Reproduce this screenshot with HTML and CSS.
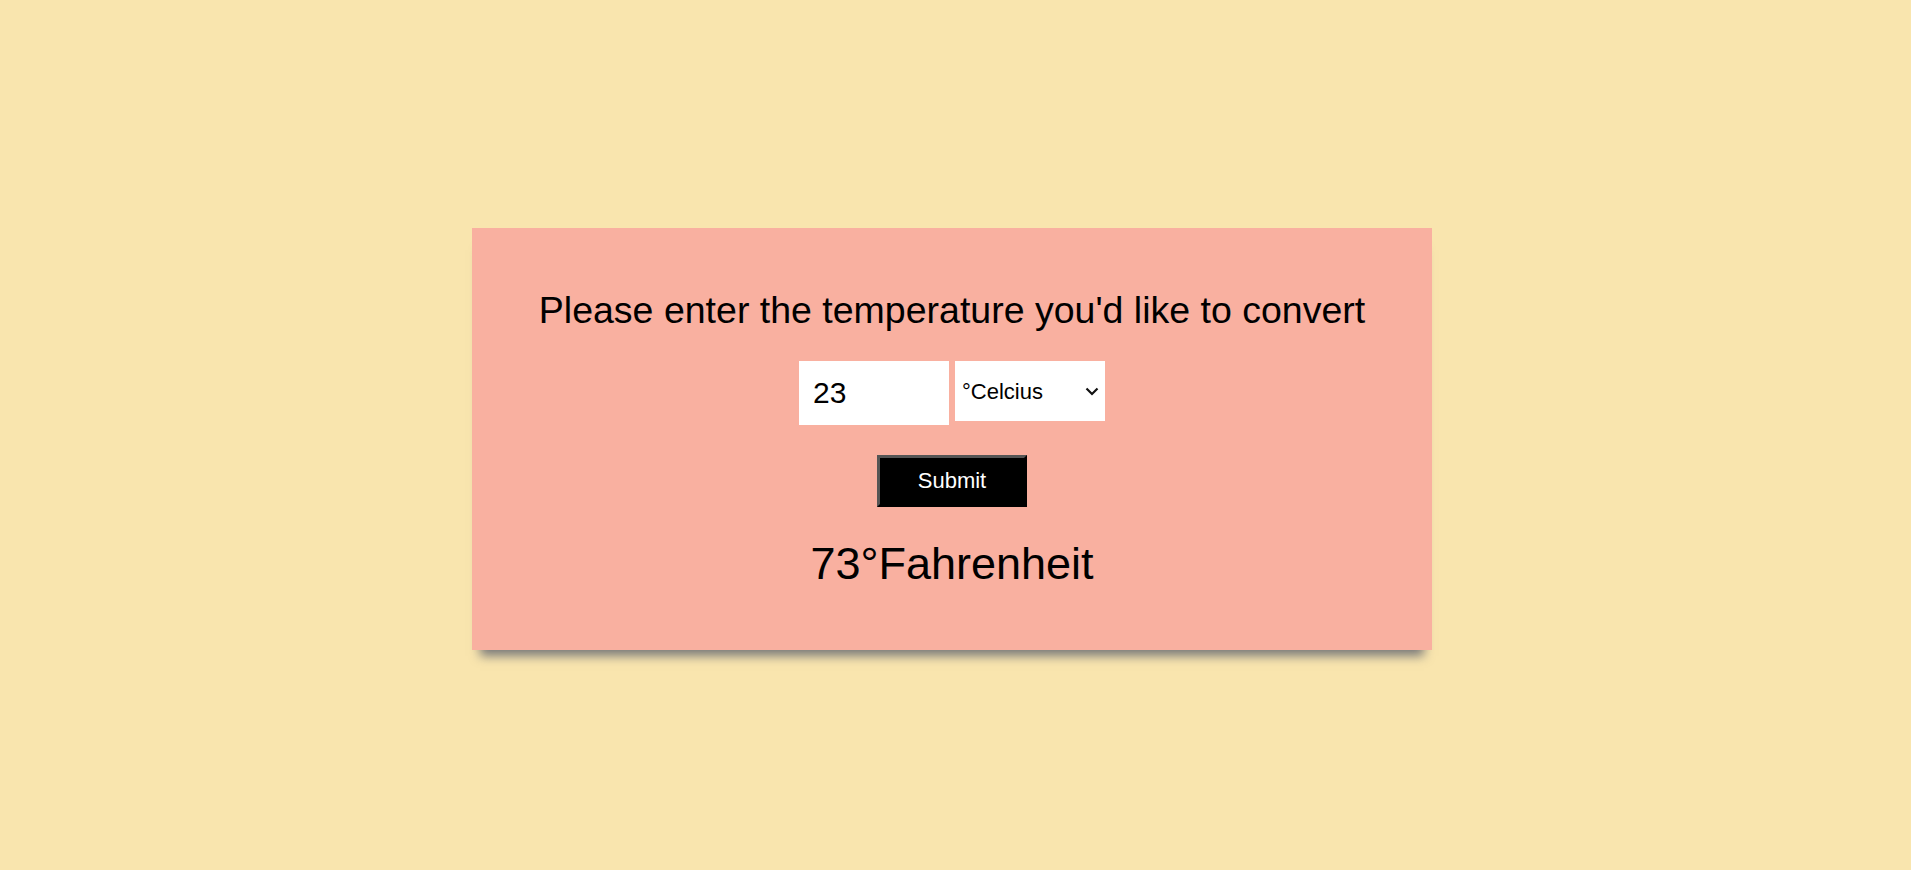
FILE: index.html
```html
<!DOCTYPE html>
<html lang="en">
<head>
<meta charset="utf-8">
<title>Temperature Converter</title>
<link rel="stylesheet" href="styles.css">
</head>
<body>
<main class="page">
  <section class="card">
    <h1 class="title">Please enter the temperature you'd like to convert</h1>
    <form class="form">
      <div class="row">
        <input class="temp-input" type="text" value="23">
        <div class="select-wrap">
          <select class="unit-select">
            <option>°Celcius</option>
            <option>°Fahrenheit</option>
          </select>
          <svg class="chevron" width="14" height="9" viewBox="0 0 14 9" aria-hidden="true">
            <path d="M1.5 1.5 L7 7 L12.5 1.5" fill="none" stroke="#111" stroke-width="2.2"/>
          </svg>
        </div>
      </div>
      <button class="submit" type="button">Submit</button>
    </form>
    <p class="result">73°Fahrenheit</p>
  </section>
</main>
</body>
</html>
```
FILE: styles.css
```css
html, body {
  margin: 0;
  padding: 0;
}

body {
  background: #f9e5ae;
  font-family: "Liberation Sans", Arial, sans-serif;
  width: 1911px;
  height: 870px;
  overflow: hidden;
}

.page {
  display: flex;
  justify-content: center;
  padding-top: 228px;
  padding-right: 7px;
}

.card {
  width: 960px;
  height: 422px;
  background: #f9b0a0;
  box-shadow: 0 14px 10px -8px #7a7a7a;
  display: flex;
  flex-direction: column;
  align-items: center;
  box-sizing: border-box;
  padding-top: 62px;
}

.title {
  margin: 0;
  font-size: 37.5px;
  font-weight: normal;
  line-height: 41px;
  color: #000;
  white-space: nowrap;
}

.form {
  display: flex;
  flex-direction: column;
  align-items: center;
  margin-top: 30px;
}

.row {
  display: flex;
  align-items: flex-start;
  gap: 6px;
}

.temp-input {
  width: 150px;
  height: 64px;
  box-sizing: border-box;
  border: none;
  outline: none;
  padding: 0 0 0 14px;
  font-family: "Liberation Sans", Arial, sans-serif;
  font-size: 30px;
  color: #000;
  background: #fff;
}

.select-wrap {
  position: relative;
  width: 150px;
  height: 60px;
}

.unit-select {
  -webkit-appearance: none;
  appearance: none;
  width: 150px;
  height: 60px;
  box-sizing: border-box;
  border: none;
  border-radius: 0;
  outline: none;
  padding: 0 24px 0 7px;
  font-family: "Liberation Sans", Arial, sans-serif;
  font-size: 22px;
  color: #000;
  background-color: #fff;
}

.chevron {
  position: absolute;
  left: 130px;
  top: 26px;
  pointer-events: none;
}

.submit {
  margin-top: 30px;
  width: 150px;
  height: 52px;
  box-sizing: border-box;
  background: #000;
  color: #fff;
  border-style: solid;
  border-width: 3px;
  border-color: #555 #000 #000 #555;
  font-family: "Liberation Sans", Arial, sans-serif;
  font-size: 22px;
  padding: 0;
}

.result {
  margin: 31px 0 0;
  font-size: 45px;
  line-height: 52px;
  color: #000;
}
```
